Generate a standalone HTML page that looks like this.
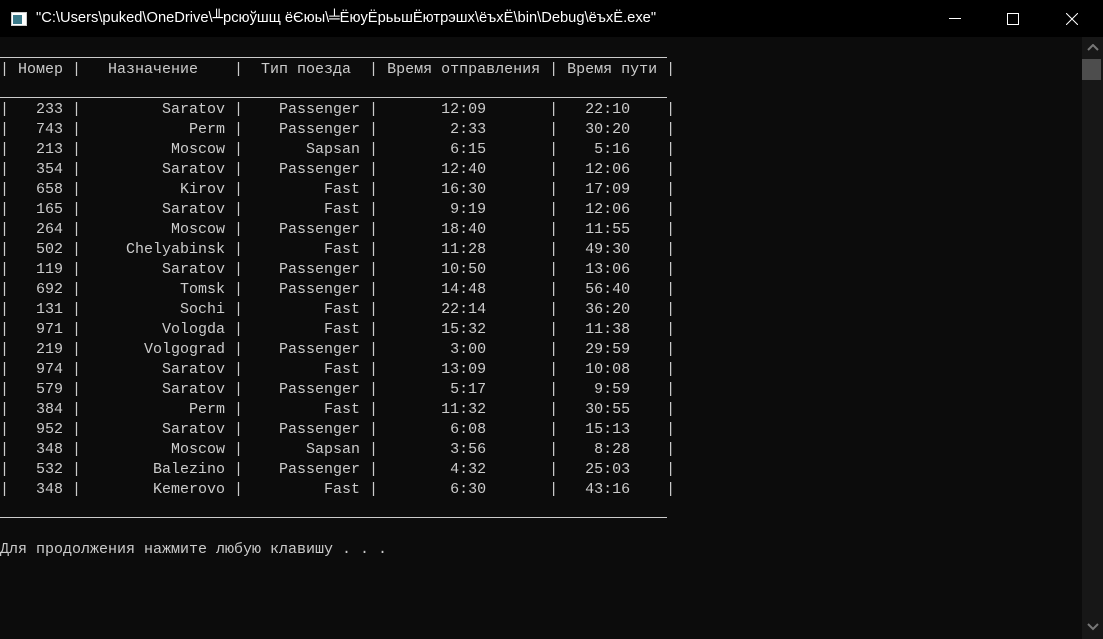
<!DOCTYPE html>
<html><head><meta charset="utf-8"><style>
html,body{margin:0;padding:0;width:1103px;height:639px;overflow:hidden;background:#0c0c0c;}
#title{position:absolute;left:0;top:0;width:1103px;height:37px;background:#000;}
#title .t{position:absolute;left:36px;top:10px;font:14.7px "Liberation Sans","Noto Sans CJK SC",sans-serif;color:#fff;white-space:pre;}
#con{position:absolute;left:0;top:40px;font:15px/20px "Liberation Mono",monospace;color:#cccccc;white-space:pre;}
.hl{position:absolute;left:0;width:667px;height:1px;background:#cccccc;}
#sb{position:absolute;left:1082px;top:37px;width:21px;height:602px;background:#171717;}
#thumb{position:absolute;left:1082px;top:59px;width:19px;height:21px;background:#4d4d4d;}
</style></head><body>
<div id="title">
<svg style="position:absolute;left:11px;top:12px" width="16" height="14"><rect x="0.5" y="0.5" width="15" height="13" fill="#fff" stroke="#ccc"/><rect x="2" y="3" width="9" height="9" fill="#3b7a8a"/></svg>
<div class="t">"C:\Users\puked\OneDrive\╨рсюўшщ ёЄюы\╧ЁюуЁрььшЁютрэшх\ёъхЁ\bin\Debug\ёъхЁ.exe"</div>
<div style="position:absolute;left:949px;top:18px;width:12px;height:1px;background:#fff"></div>
<div style="position:absolute;left:1007px;top:13px;width:10px;height:10px;border:1px solid #fff"></div>
<svg style="position:absolute;left:1066px;top:13px" width="12" height="12"><path d="M0 0L12 12M12 0L0 12" stroke="#fff" stroke-width="1"/></svg>
</div>
<div class="hl" style="top:57px"></div>
<div class="hl" style="top:97px"></div>
<div class="hl" style="top:517px"></div>
<div id="con">
| Номер |   Назначение    |  Тип поезда  | Время отправления | Время пути |

|   233 |         Saratov |    Passenger |       12:09       |   22:10    |
|   743 |            Perm |    Passenger |        2:33       |   30:20    |
|   213 |          Moscow |       Sapsan |        6:15       |    5:16    |
|   354 |         Saratov |    Passenger |       12:40       |   12:06    |
|   658 |           Kirov |         Fast |       16:30       |   17:09    |
|   165 |         Saratov |         Fast |        9:19       |   12:06    |
|   264 |          Moscow |    Passenger |       18:40       |   11:55    |
|   502 |     Chelyabinsk |         Fast |       11:28       |   49:30    |
|   119 |         Saratov |    Passenger |       10:50       |   13:06    |
|   692 |           Tomsk |    Passenger |       14:48       |   56:40    |
|   131 |           Sochi |         Fast |       22:14       |   36:20    |
|   971 |         Vologda |         Fast |       15:32       |   11:38    |
|   219 |       Volgograd |    Passenger |        3:00       |   29:59    |
|   974 |         Saratov |         Fast |       13:09       |   10:08    |
|   579 |         Saratov |    Passenger |        5:17       |    9:59    |
|   384 |            Perm |         Fast |       11:32       |   30:55    |
|   952 |         Saratov |    Passenger |        6:08       |   15:13    |
|   348 |          Moscow |       Sapsan |        3:56       |    8:28    |
|   532 |        Balezino |    Passenger |        4:32       |   25:03    |
|   348 |        Kemerovo |         Fast |        6:30       |   43:16    |


Для продолжения нажмите любую клавишу . . .</div>
<div id="sb"></div>
<div id="thumb"></div>
<svg style="position:absolute;left:1087px;top:44px" width="12" height="8"><path d="M1 6L6 1L11 6" stroke="#777" stroke-width="2" fill="none"/></svg>
<svg style="position:absolute;left:1087px;top:623px" width="12" height="8"><path d="M1 1L6 6L11 1" stroke="#777" stroke-width="2" fill="none"/></svg>
</body></html>
